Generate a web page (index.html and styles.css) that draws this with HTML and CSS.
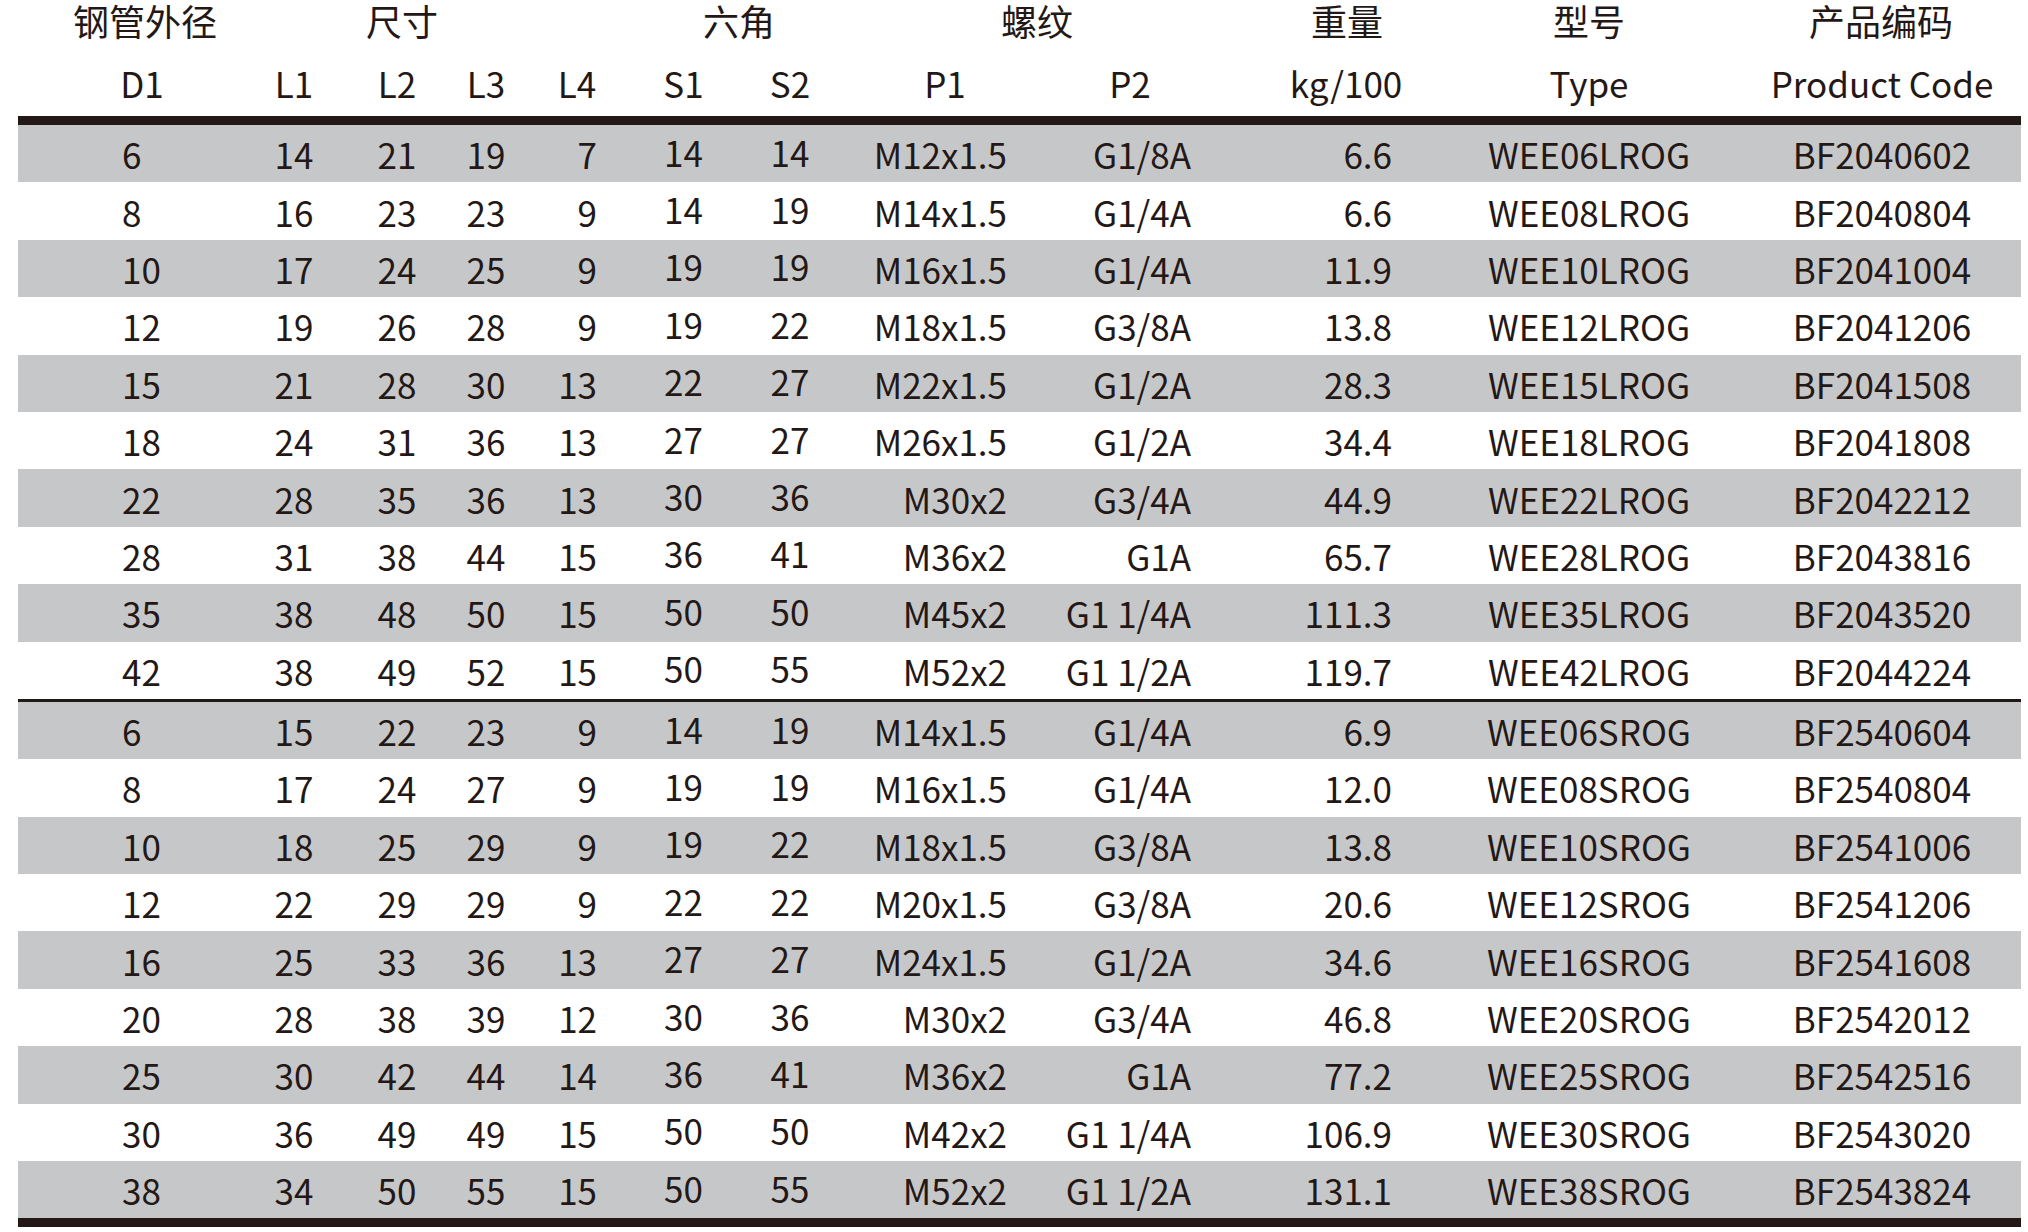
FILE: index.html
```html
<!DOCTYPE html>
<html lang="zh-CN">
<head>
<meta charset="utf-8">
<title>规格表</title>
<link rel="stylesheet" href="styles.css">
</head>
<body>
<div class="sheet">
  <div class="head-top">
    <div class="g1">钢管外径</div>
    <div class="g2">尺寸</div>
    <div class="g3">六角</div>
    <div class="g4">螺纹</div>
    <div class="g5">重量</div>
    <div class="g6">型号</div>
    <div class="g7">产品编码</div>
  </div>
  <div class="row sub">
    <div class="c1">D1</div><div class="c2">L1</div><div class="c3">L2</div><div class="c4">L3</div><div class="c5">L4</div><div class="c6">S1</div><div class="c7">S2</div><div class="c8">P1</div><div class="c9">P2</div><div class="c10">kg/100</div><div class="c11">Type</div><div class="c12">Product Code</div>
  </div>

  <div class="group first">
    <div class="row data"><div class="c1">6</div><div class="c2">14</div><div class="c3">21</div><div class="c4">19</div><div class="c5">7</div><div class="c6">14</div><div class="c7">14</div><div class="c8">M12x1.5</div><div class="c9">G1/8A</div><div class="c10">6.6</div><div class="c11">WEE06LROG</div><div class="c12">BF2040602</div></div>
    <div class="row data"><div class="c1">8</div><div class="c2">16</div><div class="c3">23</div><div class="c4">23</div><div class="c5">9</div><div class="c6">14</div><div class="c7">19</div><div class="c8">M14x1.5</div><div class="c9">G1/4A</div><div class="c10">6.6</div><div class="c11">WEE08LROG</div><div class="c12">BF2040804</div></div>
    <div class="row data"><div class="c1">10</div><div class="c2">17</div><div class="c3">24</div><div class="c4">25</div><div class="c5">9</div><div class="c6">19</div><div class="c7">19</div><div class="c8">M16x1.5</div><div class="c9">G1/4A</div><div class="c10">11.9</div><div class="c11">WEE10LROG</div><div class="c12">BF2041004</div></div>
    <div class="row data"><div class="c1">12</div><div class="c2">19</div><div class="c3">26</div><div class="c4">28</div><div class="c5">9</div><div class="c6">19</div><div class="c7">22</div><div class="c8">M18x1.5</div><div class="c9">G3/8A</div><div class="c10">13.8</div><div class="c11">WEE12LROG</div><div class="c12">BF2041206</div></div>
    <div class="row data"><div class="c1">15</div><div class="c2">21</div><div class="c3">28</div><div class="c4">30</div><div class="c5">13</div><div class="c6">22</div><div class="c7">27</div><div class="c8">M22x1.5</div><div class="c9">G1/2A</div><div class="c10">28.3</div><div class="c11">WEE15LROG</div><div class="c12">BF2041508</div></div>
    <div class="row data"><div class="c1">18</div><div class="c2">24</div><div class="c3">31</div><div class="c4">36</div><div class="c5">13</div><div class="c6">27</div><div class="c7">27</div><div class="c8">M26x1.5</div><div class="c9">G1/2A</div><div class="c10">34.4</div><div class="c11">WEE18LROG</div><div class="c12">BF2041808</div></div>
    <div class="row data"><div class="c1">22</div><div class="c2">28</div><div class="c3">35</div><div class="c4">36</div><div class="c5">13</div><div class="c6">30</div><div class="c7">36</div><div class="c8">M30x2</div><div class="c9">G3/4A</div><div class="c10">44.9</div><div class="c11">WEE22LROG</div><div class="c12">BF2042212</div></div>
    <div class="row data"><div class="c1">28</div><div class="c2">31</div><div class="c3">38</div><div class="c4">44</div><div class="c5">15</div><div class="c6">36</div><div class="c7">41</div><div class="c8">M36x2</div><div class="c9">G1A</div><div class="c10">65.7</div><div class="c11">WEE28LROG</div><div class="c12">BF2043816</div></div>
    <div class="row data"><div class="c1">35</div><div class="c2">38</div><div class="c3">48</div><div class="c4">50</div><div class="c5">15</div><div class="c6">50</div><div class="c7">50</div><div class="c8">M45x2</div><div class="c9">G1 1/4A</div><div class="c10">111.3</div><div class="c11">WEE35LROG</div><div class="c12">BF2043520</div></div>
    <div class="row data"><div class="c1">42</div><div class="c2">38</div><div class="c3">49</div><div class="c4">52</div><div class="c5">15</div><div class="c6">50</div><div class="c7">55</div><div class="c8">M52x2</div><div class="c9">G1 1/2A</div><div class="c10">119.7</div><div class="c11">WEE42LROG</div><div class="c12">BF2044224</div></div>
  </div>

  <div class="group second">
    <div class="row data"><div class="c1">6</div><div class="c2">15</div><div class="c3">22</div><div class="c4">23</div><div class="c5">9</div><div class="c6">14</div><div class="c7">19</div><div class="c8">M14x1.5</div><div class="c9">G1/4A</div><div class="c10">6.9</div><div class="c11">WEE06SROG</div><div class="c12">BF2540604</div></div>
    <div class="row data"><div class="c1">8</div><div class="c2">17</div><div class="c3">24</div><div class="c4">27</div><div class="c5">9</div><div class="c6">19</div><div class="c7">19</div><div class="c8">M16x1.5</div><div class="c9">G1/4A</div><div class="c10">12.0</div><div class="c11">WEE08SROG</div><div class="c12">BF2540804</div></div>
    <div class="row data"><div class="c1">10</div><div class="c2">18</div><div class="c3">25</div><div class="c4">29</div><div class="c5">9</div><div class="c6">19</div><div class="c7">22</div><div class="c8">M18x1.5</div><div class="c9">G3/8A</div><div class="c10">13.8</div><div class="c11">WEE10SROG</div><div class="c12">BF2541006</div></div>
    <div class="row data"><div class="c1">12</div><div class="c2">22</div><div class="c3">29</div><div class="c4">29</div><div class="c5">9</div><div class="c6">22</div><div class="c7">22</div><div class="c8">M20x1.5</div><div class="c9">G3/8A</div><div class="c10">20.6</div><div class="c11">WEE12SROG</div><div class="c12">BF2541206</div></div>
    <div class="row data"><div class="c1">16</div><div class="c2">25</div><div class="c3">33</div><div class="c4">36</div><div class="c5">13</div><div class="c6">27</div><div class="c7">27</div><div class="c8">M24x1.5</div><div class="c9">G1/2A</div><div class="c10">34.6</div><div class="c11">WEE16SROG</div><div class="c12">BF2541608</div></div>
    <div class="row data"><div class="c1">20</div><div class="c2">28</div><div class="c3">38</div><div class="c4">39</div><div class="c5">12</div><div class="c6">30</div><div class="c7">36</div><div class="c8">M30x2</div><div class="c9">G3/4A</div><div class="c10">46.8</div><div class="c11">WEE20SROG</div><div class="c12">BF2542012</div></div>
    <div class="row data"><div class="c1">25</div><div class="c2">30</div><div class="c3">42</div><div class="c4">44</div><div class="c5">14</div><div class="c6">36</div><div class="c7">41</div><div class="c8">M36x2</div><div class="c9">G1A</div><div class="c10">77.2</div><div class="c11">WEE25SROG</div><div class="c12">BF2542516</div></div>
    <div class="row data"><div class="c1">30</div><div class="c2">36</div><div class="c3">49</div><div class="c4">49</div><div class="c5">15</div><div class="c6">50</div><div class="c7">50</div><div class="c8">M42x2</div><div class="c9">G1 1/4A</div><div class="c10">106.9</div><div class="c11">WEE30SROG</div><div class="c12">BF2543020</div></div>
    <div class="row data"><div class="c1">38</div><div class="c2">34</div><div class="c3">50</div><div class="c4">55</div><div class="c5">15</div><div class="c6">50</div><div class="c7">55</div><div class="c8">M52x2</div><div class="c9">G1 1/2A</div><div class="c10">131.1</div><div class="c11">WEE38SROG</div><div class="c12">BF2543824</div></div>
  </div>
</div>
</body>
</html>
```
FILE: styles.css
```css
html, body {
  margin: 0;
  padding: 0;
  background: #ffffff;
}

body {
  font-family: "Noto Sans CJK SC", "Noto Sans", sans-serif;
  color: #231815;
  font-size: 35px;
}

.sheet {
  margin-left: 18px;
  width: 2003px;
}

.head-top,
.row {
  display: grid;
  grid-template-columns: 200px 127px 96px 94px 95px 107px 123px 180px 200px 220px 275px 286px;
  align-items: center;
  white-space: nowrap;
}

/* top header: Chinese group titles */
.head-top {
  height: 45px;
  padding-bottom: 6px;
  box-sizing: border-box;
  font-size: 36px;
  line-height: 1;
  text-align: center;
}
.g1 { grid-column: 1; padding-left: 54px; }
.g2 { grid-column: 2 / 6; padding-right: 44px; }
.g3 { grid-column: 6 / 8; padding-right: 12px; }
.g4 { grid-column: 8 / 10; padding-right: 26px; }
.g5 { grid-column: 10; padding-right: 6px; }
.g6 { grid-column: 11; padding-right: 17px; }
.g7 { grid-column: 12; padding-left: 6px; }

/* sub header: symbols */
.sub {
  height: 71px;
  padding-top: 4px;
  box-sizing: border-box;
  line-height: 1;
  text-align: center;
}
.sub .c1 { padding-left: 48px; }
.sub .c2 { padding-left: 25px; }
.sub .c3 { padding-left: 8px; }
.sub .c4 { padding-right: 4px; }
.sub .c5 { padding-right: 11px; }
.sub .c7 { padding-right: 17px; }
.sub .c8 { padding-right: 10px; }
.sub .c9 { padding-right: 20px; }
.sub .c10 { padding-right: 8px; }
.sub .c11 { padding-right: 17px; }
.sub .c12 { padding-left: 8px; }

/* groups */
.group.first {
  border-top: 9px solid #231815;
}
.group.second {
  border-top: 3px solid #231815;
  border-bottom: 9px solid #231815;
}

.data {
  height: 57.4px;
  line-height: 1;
}
.data:nth-child(odd) {
  background: #c6c7c9;
}

.data .c1 { text-align: left; padding-left: 104px; }
.data .c2 { text-align: center; padding-left: 25px; }
.data .c3 { text-align: center; padding-left: 8px; }
.data .c4 { text-align: center; padding-right: 4px; }
.data .c5 { text-align: right; padding-right: 33px; }
.data .c6 { text-align: center; padding-bottom: 5px; }
.data .c7 { text-align: center; padding-right: 17px; padding-bottom: 5px; }
.data .c8 { text-align: right; padding-right: 33px; }
.data .c9 { text-align: right; padding-right: 49px; }
.data .c10 { text-align: right; padding-right: 68px; }
.data .c11 { text-align: center; padding-right: 17px; }
.data .c12 { text-align: center; padding-left: 8px; }
```
